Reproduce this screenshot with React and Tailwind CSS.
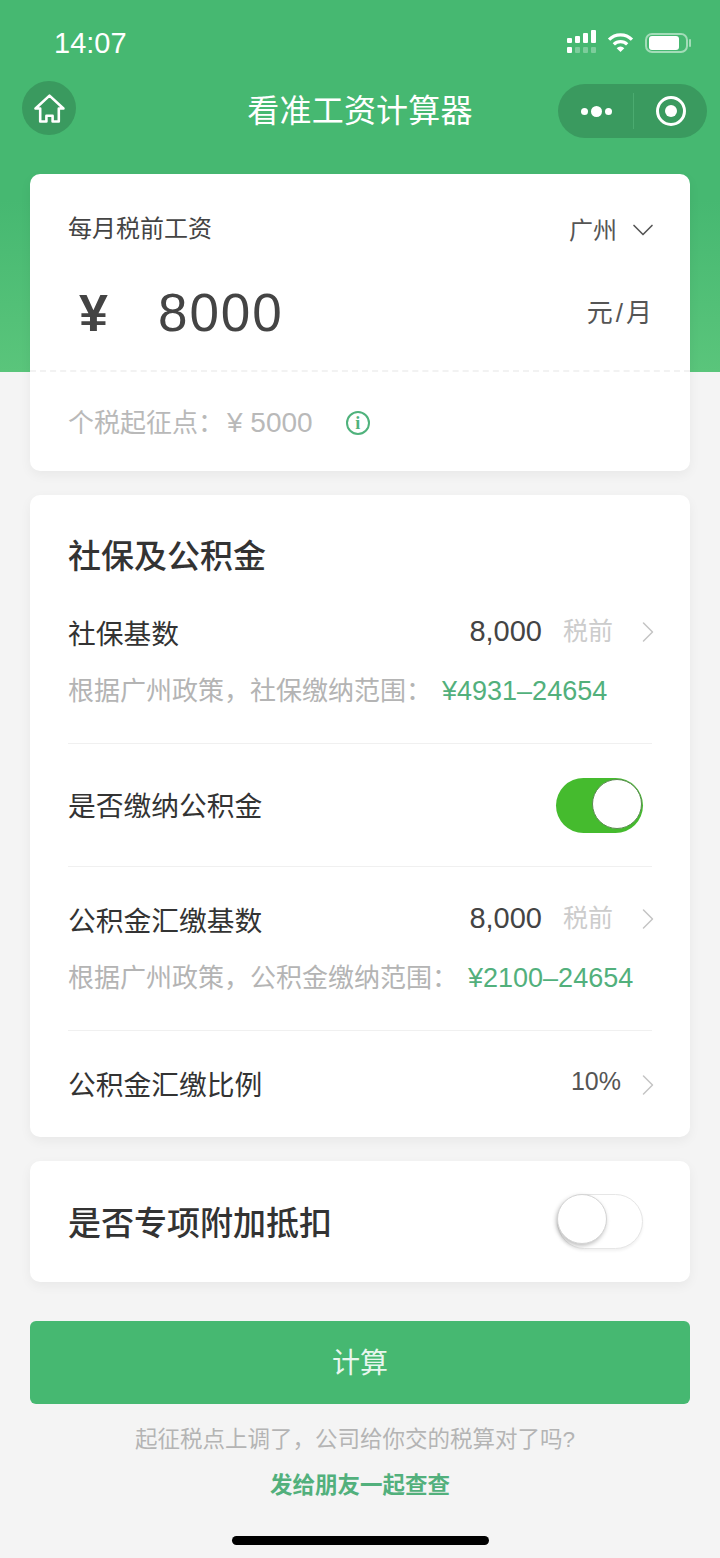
import { ChevronDown, ChevronRight } from 'lucide-react';

function Toggle({ on }) {
    if (on) {
        return (
            <div className="relative mr-[9px] h-[55px] w-[87px] rounded-full bg-[#45bb2e]">
                <div className="absolute left-[36px] top-[1px] h-[50px] w-[50px] rounded-full border border-[#5a8a50] bg-white"></div>
            </div>
        );
    }
    return (
        <div className="relative mb-[1px] h-[55px] w-[86px] rounded-full border border-[#e6e6e6] bg-white shadow-[0_2px_3px_rgba(0,0,0,0.06)]">
            <div className="absolute left-[-1px] top-[-1px] h-[50px] w-[50px] rounded-full border border-[#d4d4d4] bg-white shadow-[-1px_2px_4px_rgba(0,0,0,0.25)]"></div>
        </div>
    );
}

function BaseRow({ label, note, range }) {
    return (
        <div className="pb-[32px]">
            <div className="flex h-[44px] items-center justify-between">
                <span className="pt-[6px] text-[27.75px] text-[#333333]">{label}</span>
                <div className="flex items-center">
                    <span className="text-[29px] text-[#444444]">8,000</span>
                    <span className="ml-[21px] text-[25px] text-[#cccccc]">税前</span>
                    <ChevronRight className="ml-[17px] mr-[-14px] h-[36px] w-[36px] text-[#c4c4c4]" strokeWidth={1} />
                </div>
            </div>
            <div className="mt-[17px] flex items-center text-[26px] leading-[40px] text-[#b4b4b4]">
                <span>{note}</span>
                <span className="ml-[10px] text-[27px] text-[#52b07c]">{range}</span>
            </div>
        </div>
    );
}

export default function App() {
    return (
        <div className="h-[1558px] w-[720px] overflow-hidden bg-[linear-gradient(to_bottom,#46b871_0px,#46b871_200px,#5ac57b_372px,#f4f4f4_372px)] font-['Liberation_Sans','Noto_Sans_CJK_SC',sans-serif]">
            {/* status bar */}
            <div className="flex h-[81px] items-start justify-between pl-[54px] pr-[29px] pt-[26px] text-white">
                <span className="text-[29px] leading-[34px]">14:07</span>
                <div className="mt-[4px] flex h-[23px] items-end">
                    <svg width="30" height="23" viewBox="0 0 30 23" fill="white">
                        <rect x="0" y="8" width="5" height="5" rx="1" />
                        <rect x="8" y="6" width="5" height="7" rx="1" />
                        <rect x="16" y="3" width="5" height="10" rx="1" />
                        <rect x="24" y="0" width="5" height="13" rx="1" />
                        <rect x="0" y="17" width="5" height="6" rx="1" />
                        <rect x="8" y="17" width="5" height="6" rx="1" opacity="0.3" />
                        <rect x="16" y="17" width="5" height="6" rx="1" opacity="0.3" />
                        <rect x="24" y="17" width="5" height="6" rx="1" opacity="0.3" />
                    </svg>
                    <svg className="ml-[10px]" width="27" height="21" viewBox="0 0 28 22" fill="none" stroke="white" strokeWidth="3.4">
                        <path d="M2 8a17 17 0 0 1 24 0" />
                        <path d="M7 13a10 10 0 0 1 14 0" />
                        <path d="M14 21l-4-4a5.5 5.5 0 0 1 8 0z" fill="white" stroke="none" />
                    </svg>
                    <svg className="ml-[11px]" width="46" height="20" viewBox="0 0 46 20" fill="none">
                        <rect x="1" y="1" width="41" height="18" rx="6" stroke="white" strokeOpacity="0.5" strokeWidth="2" />
                        <rect x="4" y="3" width="30" height="14" rx="3" fill="white" />
                        <rect x="44" y="6" width="2" height="8" rx="1" fill="white" fillOpacity="0.5" />
                    </svg>
                </div>
            </div>

            {/* nav bar */}
            <div className="grid h-[93px] grid-cols-[1fr_auto_1fr] items-start px-[13px]">
                <div className="ml-[9px] flex h-[54px] w-[54px] items-center justify-center rounded-full bg-[#3a9a5f]">
                    <svg width="31" height="29" viewBox="0 0 30 28" fill="none" stroke="white" strokeWidth="2.5" strokeLinejoin="round">
                        <path d="M15 1.5L1.5 14H6v12.5h6V21h6v5.500h6V14h4.500z" />
                    </svg>
                </div>
                <span className="pt-[9px] text-[32px] leading-[42px] tracking-[0.2px] text-white">看准工资计算器</span>
                <div className="mt-[3px] flex h-[54px] w-[149px] items-center justify-self-end rounded-full bg-[#3a9a5f]">
                    <div className="flex w-[75px] items-center justify-center gap-[3px] pl-[2px]">
                        <span className="h-[7px] w-[7px] rounded-full bg-white"></span>
                        <span className="h-[11px] w-[11px] rounded-full bg-white"></span>
                        <span className="h-[7px] w-[7px] rounded-full bg-white"></span>
                    </div>
                    <div className="h-[36px] w-px bg-[#4bab70]"></div>
                    <div className="flex flex-1 items-center justify-center">
                        <div className="flex h-[30px] w-[30px] items-center justify-center rounded-full border-[3px] border-white">
                            <div className="h-[12px] w-[12px] rounded-full bg-white"></div>
                        </div>
                    </div>
                </div>
            </div>

            <div className="flex flex-col gap-[24px] px-[30px]">
                {/* salary card */}
                <div className="h-[297px] rounded-[10px] bg-white shadow-[0_4px_12px_rgba(0,0,0,0.05)]">
                    <div className="flex h-[198px] flex-col border-b-2 border-dashed border-[#f2f2f2] px-[38px]">
                        <div className="flex items-center justify-between pt-[35px]">
                            <span className="pb-[2px] text-[24px] leading-[36px] text-[#444444]">每月税前工资</span>
                            <div className="flex items-center text-[#555555]">
                                <span className="pt-[2px] text-[24px] leading-[40px]">广州</span>
                                <ChevronDown className="ml-[8px] mr-[-9px] h-[36px] w-[36px]" strokeWidth={1.1} />
                            </div>
                        </div>
                        <div className="mt-[30px] flex items-center justify-between">
                            <div className="flex items-center text-[#444444]">
                                <span className="pl-[11px] text-[52px] font-bold leading-[64px]">¥</span>
                                <span className="ml-[50px] text-[53px] leading-[64px] tracking-[2px]">8000</span>
                            </div>
                            <span className="mr-[-3px] text-[26px] tracking-[3px] text-[#555555]">元/月</span>
                        </div>
                    </div>
                    <div className="flex items-center pl-[38px] pt-[31px] text-[26px] leading-[40px] text-[#b9b9b9]">
                        <span>个税起征点：</span>
                        <span className="ml-[3px] text-[28px]">¥ 5000</span>
                        <span className="ml-[33px] flex h-[24px] w-[24px] items-center justify-center rounded-full border-2 border-[#4fb27c] font-['Liberation_Serif',serif] text-[18px] font-bold leading-none text-[#4fb27c]">i</span>
                    </div>
                </div>

                {/* social insurance card */}
                <div className="h-[642px] rounded-[10px] bg-white px-[38px] pt-[40px] shadow-[0_4px_12px_rgba(0,0,0,0.05)]">
                    <div className="text-[33px] font-medium leading-[44px] text-[#333333]">社保及公积金</div>
                    <div className="mt-[31px] border-b border-[#f0f0f0]">
                        <BaseRow label="社保基数" note="根据广州政策，社保缴纳范围：" range="¥4931–24654" />
                    </div>
                    <div className="flex h-[123px] items-center justify-between border-b border-[#f0f0f0]">
                        <span className="pt-[4px] text-[27.75px] text-[#333333]">是否缴纳公积金</span>
                        <Toggle on />
                    </div>
                    <div className="mt-[30px] border-b border-[#f0f0f0]">
                        <BaseRow label="公积金汇缴基数" note="根据广州政策，公积金缴纳范围：" range="¥2100–24654" />
                    </div>
                    <div className="flex h-[107px] items-center justify-between">
                        <span className="pt-[2px] text-[27.75px] text-[#333333]">公积金汇缴比例</span>
                        <div className="flex items-center">
                            <span className="pb-[6px] text-[25px] text-[#555555]">10%</span>
                            <ChevronRight className="ml-[9px] mr-[-14px] h-[36px] w-[36px] text-[#c4c4c4]" strokeWidth={1} />
                        </div>
                    </div>
                </div>

                {/* deduction card */}
                <div className="flex h-[121px] items-center justify-between rounded-[10px] bg-white pl-[38px] pr-[47px] shadow-[0_4px_12px_rgba(0,0,0,0.05)]">
                    <span className="pt-[5px] text-[33px] font-medium text-[#333333]">是否专项附加抵扣</span>
                    <Toggle />
                </div>

                <button className="mt-[15px] h-[83px] rounded-[6px] bg-[#46b871] pt-[3px] text-[28px] text-[#e8f6ee]">计算</button>
            </div>

            <div className="mt-[16px] pr-[10px] text-center text-[22.5px] leading-[40px] text-[#b4b4b4]">起征税点上调了，公司给你交的税算对了吗?</div>
            <div className="mt-[6px] text-center text-[22.5px] font-bold leading-[40px] text-[#52b07c]">发给朋友一起查查</div>

            <div className="mt-[30px] flex justify-center">
                <div className="h-[9px] w-[257px] rounded-full bg-black"></div>
            </div>
        </div>
    );
}
